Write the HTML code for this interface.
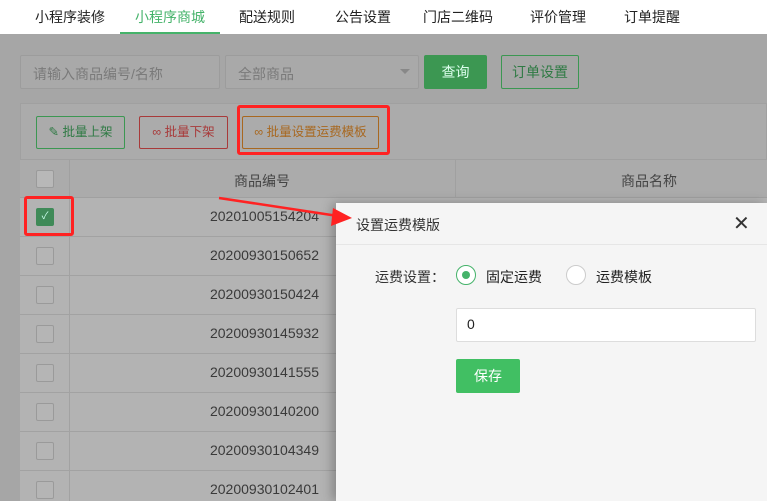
<!DOCTYPE html>
<html style="background:#a6a6a6;overflow:hidden"><head><meta charset="utf-8"><style>
*{box-sizing:border-box;margin:0;padding:0}
body{width:767px;height:501px;overflow:hidden;position:relative;background:#a6a6a6;font-family:"Liberation Sans","Noto Sans CJK SC",sans-serif;font-size:13px;color:#333}
.abs{position:absolute}
.nav{left:0;top:0;width:767px;height:34px;background:#fff}
.nav span{position:absolute;top:7px;font-size:14px;color:#222}
.inp{border:1px solid #9c9c9c;background:#a9a9a9;color:#7a7a7a;font-size:14px;padding:8px 12px;border-radius:2px}
.btn{border:1px solid;border-radius:2px;font-size:12.5px;text-align:center;line-height:30px}
.row{left:20px;width:747px;height:39px;background:#b3b3b3;border-bottom:1px solid #a2a2a2}
.cb{position:absolute;left:16px;top:10px;width:18px;height:18px;border:1px solid #9a9a9a;border-radius:2px;background:#b5b5b5}
.num{position:absolute;left:0;width:299px;text-align:right;top:10px;font-size:14px;color:#3a3a3a}
</style></head><body>
<div class="abs nav">
<span style="left:35px">小程序装修</span>
<span style="left:135px;color:#45b36a">小程序商城</span>
<span style="left:239px">配送规则</span>
<span style="left:335px">公告设置</span>
<span style="left:423px">门店二维码</span>
<span style="left:530px">评价管理</span>
<span style="left:624px">订单提醒</span>
<div class="abs" style="left:120px;top:32px;width:100px;height:2px;background:#45b36a"></div>
</div>
<div class="abs inp" style="left:20px;top:55px;width:200px;height:34px">请输入商品编号/名称</div>
<div class="abs inp" style="left:225px;top:55px;width:194px;height:34px">全部商品<span style="position:absolute;right:8px;top:13px;border:5px solid transparent;border-top-color:#888"></span></div>
<div class="abs btn" style="left:424px;top:55px;width:63px;height:34px;background:#3c9752;border-color:#3c9752;color:#dfe;font-size:14px;line-height:32px">查询</div>
<div class="abs btn" style="left:501px;top:55px;width:78px;height:34px;border-color:#3c9752;color:#2f7a44;font-size:14px;line-height:32px">订单设置</div>
<div class="abs" style="left:20px;top:103px;width:747px;height:57px;background:#ababab;border:1px solid #a0a0a0"></div>
<div class="abs btn" style="left:36px;top:116px;width:89px;height:33px;border-color:#3c9752;color:#2f7a44">✎ 批量上架</div>
<div class="abs btn" style="left:139px;top:116px;width:89px;height:33px;border-color:#a83a3a;color:#a83a3a">∞ 批量下架</div>
<div class="abs btn" style="left:242px;top:116px;width:137px;height:33px;border-color:#a86820;color:#a86820">∞ 批量设置运费模板</div>
<div class="abs" style="left:20px;top:160px;width:747px;height:38px;background:#ababab;border-bottom:1px solid #a0a0a0">
<div class="cb" style="background:#b8b8b8"></div>
<div class="abs" style="left:49px;top:0;width:1px;height:38px;background:#a0a0a0"></div>
<div class="abs" style="left:435px;top:0;width:1px;height:38px;background:#a0a0a0"></div>
<span class="abs" style="left:214px;top:11px;font-size:14px;color:#444">商品编号</span>
<span class="abs" style="left:601px;top:11px;font-size:14px;color:#444">商品名称</span>
</div>
<div class="abs" style="left:20px;top:198px;width:747px;height:303px;overflow:hidden">
<div class="abs row" style="left:0;top:0"><div class="cb" style="background:#3f8a58;border-color:#3f8a58;color:#cfe;font-size:10px;text-align:center;line-height:16px">✓</div><div class="num">20201005154204</div></div>
<div class="abs row" style="left:0;top:39px"><div class="cb"></div><div class="num">20200930150652</div></div>
<div class="abs row" style="left:0;top:78px"><div class="cb"></div><div class="num">20200930150424</div></div>
<div class="abs row" style="left:0;top:117px"><div class="cb"></div><div class="num">20200930145932</div></div>
<div class="abs row" style="left:0;top:156px"><div class="cb"></div><div class="num">20200930141555</div></div>
<div class="abs row" style="left:0;top:195px"><div class="cb"></div><div class="num">20200930140200</div></div>
<div class="abs row" style="left:0;top:234px"><div class="cb"></div><div class="num">20200930104349</div></div>
<div class="abs row" style="left:0;top:273px"><div class="cb"></div><div class="num">20200930102401</div></div>
<div class="abs" style="left:49px;top:0;width:1px;height:303px;background:#a2a2a2"></div>
</div>
<div class="abs" style="left:336px;top:203px;width:431px;height:298px;background:#f5f5f5;box-shadow:-4px 0 10px rgba(0,0,0,.25)">
<div class="abs" style="left:0;top:0;width:431px;height:42px;border-bottom:1px solid #e6e6e6"></div>
<span class="abs" style="left:20px;top:12px;font-size:14px;color:#333">设置运费模版</span>
<span class="abs" style="left:397px;top:8px;font-size:20px;color:#333">✕</span>
<span class="abs" style="left:39px;top:64px;font-size:14px;color:#333">运费设置：</span>
<div class="abs" style="left:120px;top:62px;width:20px;height:20px;border:1px solid #45b36a;border-radius:50%;background:#fff"><div style="margin:5px;width:8px;height:8px;border-radius:50%;background:#45b36a"></div></div>
<span class="abs" style="left:150px;top:64px;font-size:14px;color:#222">固定运费</span>
<div class="abs" style="left:230px;top:62px;width:20px;height:20px;border:1px solid #ccc;border-radius:50%;background:#fff"></div>
<span class="abs" style="left:260px;top:64px;font-size:14px;color:#222">运费模板</span>
<div class="abs" style="left:120px;top:105px;width:300px;height:34px;border:1px solid #ddd;background:#fff;border-radius:2px;padding:7px 10px;font-size:14px;color:#222">0</div>
<div class="abs" style="left:120px;top:156px;width:64px;height:34px;background:#41bf63;border-radius:2px;color:#fff;font-size:14px;text-align:center;line-height:34px">保存</div>
</div>
<div class="abs" style="left:237px;top:105px;width:153px;height:50px;border:3px solid #f22;border-radius:3px"></div>
<div class="abs" style="left:24px;top:196px;width:50px;height:40px;border:3px solid #f22;border-radius:3px"></div>
<svg class="abs" style="left:0;top:0" width="767" height="501"><line x1="219" y1="198" x2="338" y2="216" stroke="#f22" stroke-width="2.5"/><polygon points="352,218 333,208 331,226" fill="#f22"/></svg>
</body></html>
